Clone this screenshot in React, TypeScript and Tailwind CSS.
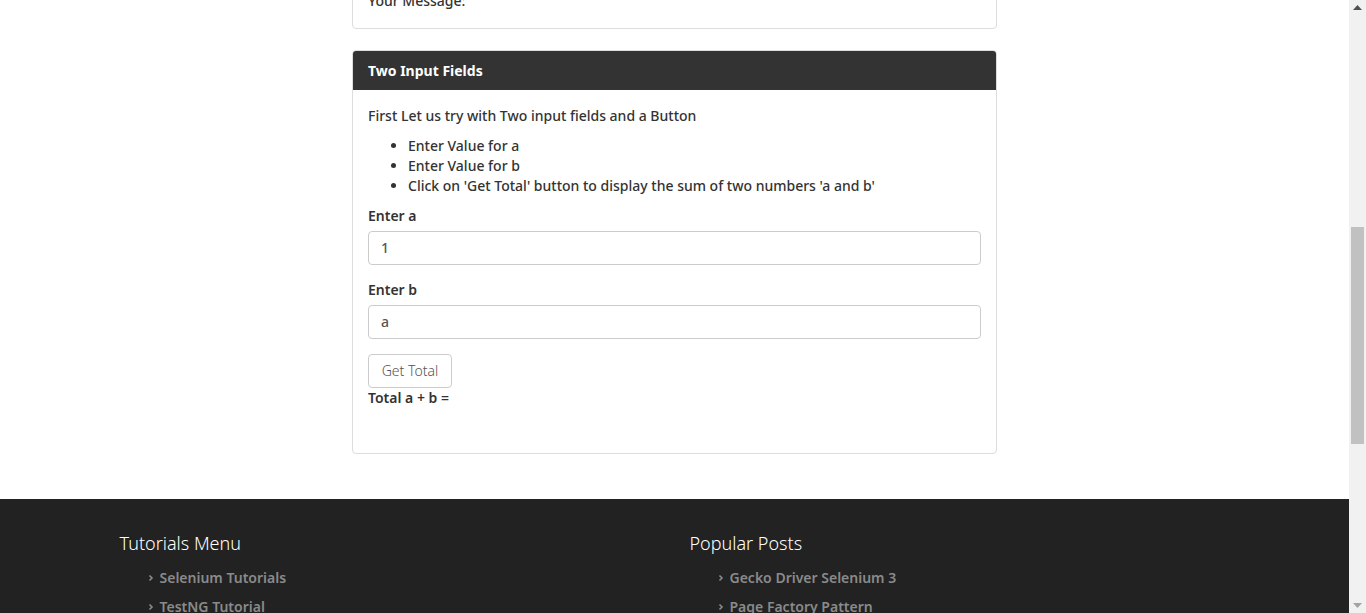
import React from "react";

const font = { fontFamily: '"Noto Sans", "Liberation Sans", sans-serif' };

function Chevron() {
  return (
    <svg width="6" height="8" viewBox="0 0 6 8" className="mr-[6px] inline-block">
      <path d="M1.5 1.5 L4 4 L1.5 6.5" stroke="#8a8a8a" strokeWidth="1.6" fill="none" />
    </svg>
  );
}

export default function App() {
  return (
    <div className="relative flex h-[613px] w-full overflow-hidden bg-white text-[#333]" style={font}>
      <div className="flex w-[1349px] shrink-0 flex-col">
        <div className="mx-auto w-[645px]">
          <div className="mt-[-25px] rounded-[4px] border border-[#ddd] bg-white px-[15px] pb-[17px] pt-[15px]">
            <p className="text-[14px] leading-[20px] font-medium text-[#333]">Your Message:</p>
          </div>
          <div className="mt-[21px] overflow-hidden rounded-[4px] border border-[#ddd] bg-white">
            <div className="flex h-[39px] items-center bg-[#333] px-[15px] text-[14px] font-bold text-white">
              Two Input Fields
            </div>
            <div className="px-[15px] pb-[45px] pt-[16px] text-[14px] leading-[20px] font-medium text-[#333]">
              <p className="mb-[10px]">First Let us try with Two input fields and a Button</p>
              <ul className="mb-[10px] list-disc pl-[40px]">
                <li>Enter Value for a</li>
                <li>Enter Value for b</li>
                <li>Click on 'Get Total' button to display the sum of two numbers 'a and b'</li>
              </ul>
              <div className="mb-[15px]">
                <div className="mb-[5px] font-semibold">Enter a</div>
                <div className="flex h-[34px] items-center rounded-[4px] border border-[#ccc] px-[12px] text-[#555]">1</div>
              </div>
              <div className="mb-[15px]">
                <div className="mb-[5px] font-semibold">Enter b</div>
                <div className="flex h-[34px] items-center rounded-[4px] border border-[#ccc] px-[12px] text-[#555]">a</div>
              </div>
              <div className="flex h-[34px] w-[84px] items-center justify-center rounded-[4px] border border-[#ccc] text-[14px] font-light text-[#555]">
                Get Total
              </div>
              <div className="font-semibold">Total a + b =</div>
            </div>
          </div>
        </div>
        <div className="mt-[45px] flex-1 bg-[#222]">
          <div className="mx-auto flex w-[1140px] pt-[30px]">
            <div className="w-[570px] px-[15px]">
              <h3 className="text-[18px] leading-[28px] font-light text-white">Tutorials Menu</h3>
              <ul className="mt-[6px] pl-[28px] text-[14px] font-semibold text-[#8a8a8a]">
                <li className="flex h-[29px] items-center"><Chevron />Selenium Tutorials</li>
                <li className="flex h-[29px] items-center"><Chevron />TestNG Tutorial</li>
              </ul>
            </div>
            <div className="w-[570px] px-[15px]">
              <h3 className="text-[18px] leading-[28px] font-light text-white">Popular Posts</h3>
              <ul className="mt-[6px] pl-[28px] text-[14px] font-semibold text-[#8a8a8a]">
                <li className="flex h-[29px] items-center"><Chevron />Gecko Driver Selenium 3</li>
                <li className="flex h-[29px] items-center"><Chevron />Page Factory Pattern</li>
              </ul>
            </div>
          </div>
        </div>
      </div>
      <div className="relative h-full w-[17px] shrink-0 bg-[#f1f1f1]">
        <svg className="absolute left-[4px] top-[5px]" width="9" height="5" viewBox="0 0 9 5">
          <path d="M0 5 L4.5 0 L9 5 Z" fill="#505050" />
        </svg>
        <div className="absolute left-[2px] top-[227px] h-[217px] w-[13px] bg-[#c1c1c1]" />
        <svg className="absolute bottom-[5px] left-[4px]" width="9" height="5" viewBox="0 0 9 5">
          <path d="M0 0 L9 0 L4.5 5 Z" fill="#a3a3a3" />
        </svg>
      </div>
    </div>
  );
}
